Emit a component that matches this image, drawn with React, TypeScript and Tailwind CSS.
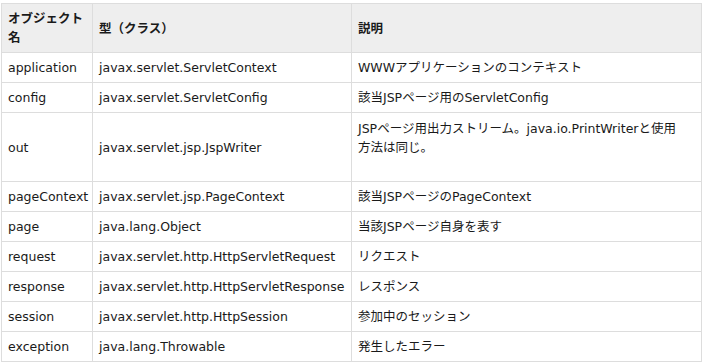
import React from "react";

const rows: { name: string; type: string; desc: React.ReactNode; tall?: boolean }[] = [
  { name: "application", type: "javax.servlet.ServletContext", desc: "WWWアプリケーションのコンテキスト" },
  { name: "config", type: "javax.servlet.ServletConfig", desc: "該当JSPページ用のServletConfig" },
  {
    name: "out",
    type: "javax.servlet.jsp.JspWriter",
    desc: (
      <>
        <span className="whitespace-nowrap">JSPページ用出力ストリーム。java.io.PrintWriterと使用</span>
        <br />
        方法は同じ。
        <br />
        &nbsp;
      </>
    ),
    tall: true,
  },
  { name: "pageContext", type: "javax.servlet.jsp.PageContext", desc: "該当JSPページのPageContext" },
  { name: "page", type: "java.lang.Object", desc: "当該JSPページ自身を表す" },
  { name: "request", type: "javax.servlet.http.HttpServletRequest", desc: "リクエスト" },
  { name: "response", type: "javax.servlet.http.HttpServletResponse", desc: "レスポンス" },
  { name: "session", type: "javax.servlet.http.HttpSession", desc: "参加中のセッション" },
  { name: "exception", type: "java.lang.Throwable", desc: "発生したエラー" },
];

export default function App() {
  return (
    <div className="bg-white pt-[3px] pl-px w-[706px] h-[362px] font-['DejaVu_Sans','Noto_Sans_CJK_JP',sans-serif] text-[12.5px] leading-[19px] text-[#1a1a1a]">
      <table className="border-collapse table-fixed w-[700px]">
        <colgroup>
          <col className="w-[91px]" />
          <col className="w-[259px]" />
          <col className="w-[350px]" />
        </colgroup>
        <thead>
          <tr className="bg-[#eeeeee] h-[49px]">
            <th className="border border-[#dddddd] px-[6px] py-[5px] text-left align-middle font-bold">オブジェクト名</th>
            <th className="border border-[#dddddd] px-[6px] py-[5px] text-left align-middle font-bold">型（クラス）</th>
            <th className="border border-[#dddddd] px-[6px] py-[5px] text-left align-middle font-bold">説明</th>
          </tr>
        </thead>
        <tbody>
          {rows.map((r) => (
            <tr key={r.name} className={r.tall ? "h-[69px]" : "h-[30px]"}>
              <td className="border border-[#dddddd] px-[6px] py-[4px] align-middle whitespace-nowrap">{r.name}</td>
              <td className="border border-[#dddddd] px-[6px] py-[4px] align-middle whitespace-nowrap">{r.type}</td>
              <td className="border border-[#dddddd] px-[6px] py-[4px] align-middle">{r.desc}</td>
            </tr>
          ))}
        </tbody>
      </table>
    </div>
  );
}
